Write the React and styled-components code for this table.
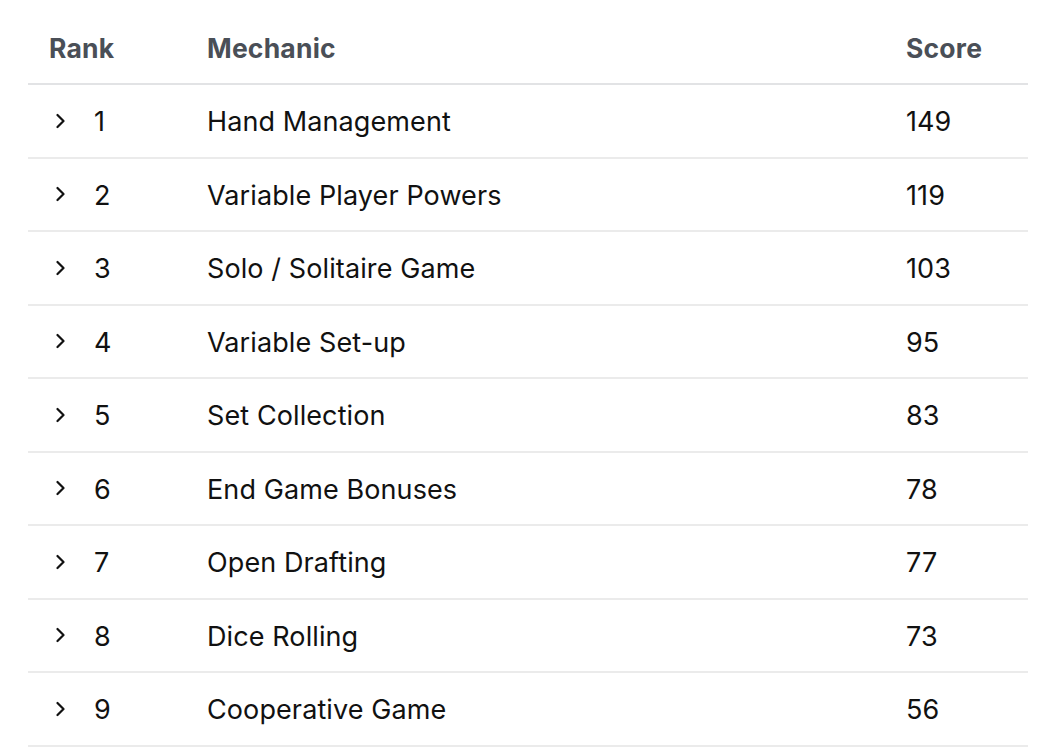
import React from "react";
import styled, { createGlobalStyle } from "styled-components";

const Global = createGlobalStyle`
  html, body { margin: 0; padding: 0; background: #fff; }
  body { font-family: Inter, "Noto Sans", sans-serif; }
  *, *::before, *::after { box-sizing: border-box; }
`;

const Wrap = styled.div`
  padding: 0 34px 0 28px;
`;

const Table = styled.table`
  width: 1000px;
  table-layout: fixed;
  border-collapse: collapse;
  font-size: 27px;
  color: #111;
`;

const Th = styled.th`
  height: 84px;
  padding: 12px 21px 0;
  text-align: left;
  font-weight: 700;
  font-size: 26.5px;
  letter-spacing: 0.2px;
  color: #4a4f57;
  border-bottom: 2px solid #e2e3e5;
  width: ${(p) => p.$w || "auto"};
`;

const Tr = styled.tr`
  border-bottom: 2px solid #ebebeb;
`;

const Td = styled.td`
  height: 73.5px;
  padding: 2px 21px 0;
  vertical-align: middle;
  letter-spacing: 0.1px;
`;

const RankCell = styled.div`
  display: flex;
  align-items: center;
  gap: 29px;
  padding-left: 7px;
`;

const Chevron = styled.svg`
  width: 9px;
  height: 16px;
  flex: none;
  margin-top: -2px;
`;

const rows = [
  [1, "Hand Management", 149],
  [2, "Variable Player Powers", 119],
  [3, "Solo / Solitaire Game", 103],
  [4, "Variable Set-up", 95],
  [5, "Set Collection", 83],
  [6, "End Game Bonuses", 78],
  [7, "Open Drafting", 77],
  [8, "Dice Rolling", 73],
  [9, "Cooperative Game", 56],
];

export default function App() {
  return (
    <>
      <Global />
      <Wrap>
        <Table>
          <thead>
            <tr>
              <Th $w="158px">Rank</Th>
              <Th>Mechanic</Th>
              <Th $w="143px">Score</Th>
            </tr>
          </thead>
          <tbody>
            {rows.map(([r, m, s]) => (
              <Tr key={r}>
                <Td>
                  <RankCell>
                    <Chevron viewBox="0 0 9 16">
                      <path d="M1.5 2 L7.5 8 L1.5 14" fill="none" stroke="#111" strokeWidth="2.2" strokeLinecap="round" strokeLinejoin="round" />
                    </Chevron>
                    {r}
                  </RankCell>
                </Td>
                <Td>{m}</Td>
                <Td>{s}</Td>
              </Tr>
            ))}
          </tbody>
        </Table>
      </Wrap>
    </>
  );
}
